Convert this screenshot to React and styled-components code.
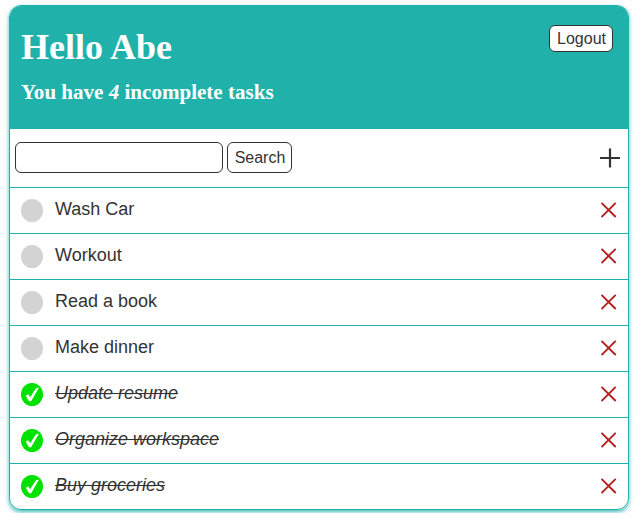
import React from "react";
import styled, { createGlobalStyle, css } from "styled-components";

const GlobalStyle = createGlobalStyle`
  *, *::before, *::after { box-sizing: border-box; }
  body {
    margin: 0;
    background: #fff;
    color: #333;
    font-family: "Liberation Sans", Arial, sans-serif;
  }
`;

const Page = styled.div`
  min-height: 100vh;
  padding: 5px 0 0 9px;
`;

const Card = styled.main`
  width: 620px;
  border: 1px solid lightseagreen;
  border-radius: 12px;
  box-shadow: 0 2px 4px rgba(32, 178, 170, 0.85);
  overflow: hidden;
`;

const Header = styled.header`
  display: flex;
  justify-content: space-between;
  align-items: flex-start;
  height: 123px;
  padding: 19px 15px 0 11px;
  background: lightseagreen;
  color: #fff;
  font-family: "Liberation Serif", "Times New Roman", serif;
`;

const Title = styled.h1`
  margin: 1px 0 0;
  font-size: 36px;
  line-height: 42px;
`;

const Subtitle = styled.h2`
  margin: 12px 0 0;
  font-size: 21.06px;
  line-height: 24px;
`;

const Button = styled.button`
  height: ${(p) => p.$height}px;
  width: ${(p) => p.$width}px;
  padding: 0 0 0 1px;
  border: 1px solid #333;
  border-radius: 6px;
  background: #fff;
  color: #333;
  font: 16px/1 "Liberation Sans", Arial, sans-serif;
`;

const Toolbar = styled.div`
  display: flex;
  align-items: flex-start;
  gap: 4px;
  height: 59px;
  padding: 13px 8px 0 5px;
  border-bottom: 1px solid lightseagreen;
`;

const SearchInput = styled.input`
  width: 208px;
  height: 31px;
  padding: 0 8px;
  border: 1px solid #333;
  border-radius: 6px;
  font: 16px "Liberation Sans", Arial, sans-serif;
`;

const IconButton = styled.button`
  display: flex;
  align-items: center;
  height: 31px;
  margin-left: auto;
  padding: 0;
  border: 0;
  background: none;
  color: ${(p) => p.$color};
`;

const TaskList = styled.ul`
  margin: 0;
  padding: 0;
  list-style: none;
`;

const Task = styled.li`
  display: flex;
  align-items: flex-start;
  height: 46px;
  padding: 11px 11px 0;
  border-bottom: 1px solid lightseagreen;

  &:last-child {
    height: 45px;
    border-bottom: 0;
  }

  ${IconButton} {
    height: 22px;
  }
`;

const Status = styled.span`
  display: flex;
  width: 22px;
  height: 23px;
  border-radius: 50%;
  background: ${(p) => (p.$done ? "#00e100" : "lightgray")};
`;

const TaskName = styled.span`
  margin-left: 12px;
  font-size: 18px;
  line-height: 20px;
  ${(p) =>
    p.$done &&
    css`
      font-style: italic;
      text-decoration: line-through;
    `}
`;

const tasks = [
  ["Wash Car", false],
  ["Workout", false],
  ["Read a book", false],
  ["Make dinner", false],
  ["Update resume", true],
  ["Organize workspace", true],
  ["Buy groceries", true],
];

const CheckIcon = () => (
  <svg width="22" height="23" viewBox="0 0 22 23" fill="#fff">
    <path d="M4.7 12.8 L7.2 11.3 L9.2 14.2 L14.8 5.4 L18 4.4 L10.2 18.2 L8 18.2 Z" />
  </svg>
);

const CrossIcon = () => (
  <svg width="16" height="16" viewBox="0 0 16 16" fill="none" stroke="currentColor" strokeWidth="1.9">
    <path d="M0.5 0.8 L14.7 15 M14.7 0.8 L0.5 15" />
  </svg>
);

const PlusIcon = () => (
  <svg width="20" height="20" viewBox="0 0 20 20" fill="none" stroke="currentColor" strokeWidth="2.2">
    <path d="M0 10 H20 M10 0.5 V19.5" />
  </svg>
);

export default function App() {
  const remaining = tasks.filter(([, done]) => !done).length;
  return (
    <Page>
      <GlobalStyle />
      <Card>
        <Header>
          <div>
            <Title>Hello Abe</Title>
            <Subtitle>
              You have <em>{remaining}</em> incomplete tasks
            </Subtitle>
          </div>
          <Button $width={64} $height={27}>Logout</Button>
        </Header>
        <Toolbar>
          <SearchInput aria-label="Search tasks" />
          <Button $width={65} $height={31}>Search</Button>
          <IconButton $color="#333" aria-label="Add task">
            <PlusIcon />
          </IconButton>
        </Toolbar>
        <TaskList>
          {tasks.map(([name, done]) => (
            <Task key={name}>
              <Status $done={done}>{done && <CheckIcon />}</Status>
              <TaskName $done={done}>{name}</TaskName>
              <IconButton $color="#b22222" aria-label={`Delete ${name}`}>
                <CrossIcon />
              </IconButton>
            </Task>
          ))}
        </TaskList>
      </Card>
    </Page>
  );
}
